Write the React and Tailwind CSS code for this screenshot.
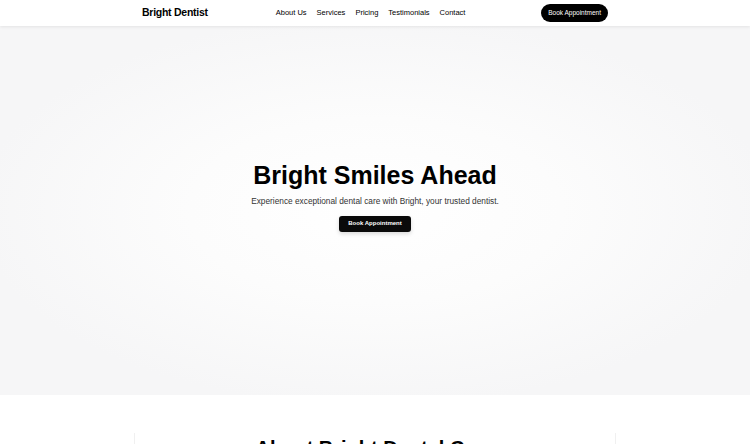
export default function App() {
  return (
    <div className="min-h-screen bg-white text-black" style={{ fontFamily: '"Liberation Sans", Arial, sans-serif' }}>
      {/* Header */}
      <header className="relative z-10 h-[26px] bg-white shadow-[0_1px_3px_rgba(0,0,0,0.08)]">
        <div className="mx-auto flex h-full max-w-[512px] items-center px-[23px]">
          <span className="text-[10.5px] font-bold tracking-tight">Bright Dentist</span>
          <nav className="ml-[68px] flex items-center gap-[10px] text-[7.5px] text-black">
            <span>About Us</span>
            <span>Services</span>
            <span>Pricing</span>
            <span>Testimonials</span>
            <span>Contact</span>
          </nav>
          <button className="ml-auto flex h-[18px] items-center rounded-full bg-black px-[7px] text-[6.5px] text-white">
            Book Appointment
          </button>
        </div>
      </header>

      {/* Hero */}
      <section className="flex h-[369px] flex-col items-center justify-center bg-[radial-gradient(ellipse_at_center,#ffffff_0%,#fcfcfc_35%,#f6f6f7_75%)] pb-[26px]">
        <h1 className="text-[25px] font-bold leading-none">Bright Smiles Ahead</h1>
        <p className="mt-[7px] text-[8.3px] text-[#333]">
          Experience exceptional dental care with Bright, your trusted dentist.
        </p>
        <button className="mt-[8px] flex h-[16px] w-[72px] items-center justify-center rounded-[3px] bg-[#0a0a0a] text-[6px] font-bold text-white shadow-[0_2px_4px_rgba(0,0,0,0.15)]">
          Book Appointment
        </button>
      </section>

      {/* About */}
      <section className="bg-white pt-[38px]">
        <div className="mx-auto w-[482px] border-x border-[#f0f0f0] pt-[3px] text-center">
          <h2 className="text-[20px] font-bold leading-tight">About Bright Dental Care</h2>
        </div>
      </section>
    </div>
  );
}
